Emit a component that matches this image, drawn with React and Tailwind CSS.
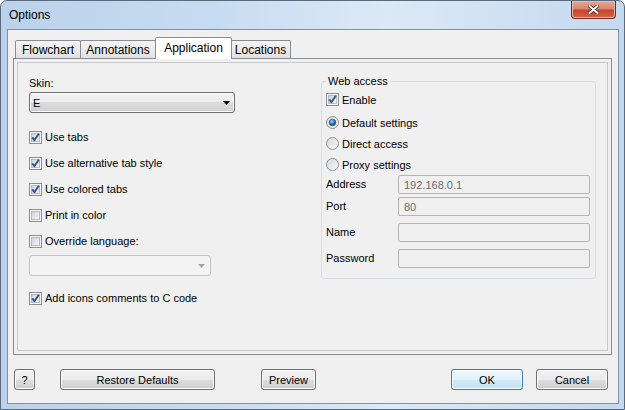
import React from 'react';

function CheckBox({ checked }) {
  return (
    <svg width="13" height="13" viewBox="0 0 13 13" className="shrink-0">
      <defs>
        <linearGradient id="cbFill" x1="0" y1="0" x2="1" y2="1">
          <stop offset="0" stopColor="#cdd1d6" />
          <stop offset="1" stopColor="#f8f8f8" />
        </linearGradient>
      </defs>
      <rect x="0.5" y="0.5" width="12" height="12" fill="#f6f6f6" stroke="#8e8f8f" />
      <rect x="2.5" y="2.5" width="8" height="8" fill="url(#cbFill)" stroke="#b7babe" />
      {checked && (
        <path d="M3.2 6.4 L5.4 9.2 L9.8 2.8" fill="none" stroke="#34508f" strokeWidth="1.9" strokeLinejoin="round" />
      )}
    </svg>
  );
}

function Radio({ checked }) {
  return (
    <svg width="13" height="13" viewBox="0 0 13 13" className="shrink-0">
      <defs>
        <linearGradient id="rbFill" x1="0" y1="0" x2="1" y2="1">
          <stop offset="0" stopColor="#d2d4d8" />
          <stop offset="1" stopColor="#fbfbfb" />
        </linearGradient>
        <radialGradient id="rbDot" cx="0.4" cy="0.35" r="0.7">
          <stop offset="0" stopColor="#a6e0ff" />
          <stop offset="0.5" stopColor="#2b7fc3" />
          <stop offset="1" stopColor="#0b3d75" />
        </radialGradient>
      </defs>
      <circle cx="6.5" cy="6.5" r="6" fill="url(#rbFill)" stroke="#8e8f8f" />
      {checked && <circle cx="6.5" cy="6.5" r="3.3" fill="url(#rbDot)" stroke="#1b4a80" strokeWidth="0.6" />}
    </svg>
  );
}

function Arrow({ color }) {
  return (
    <svg width="7" height="4" viewBox="0 0 7 4" className="shrink-0">
      <path d="M0 0 H7 L3.5 4 Z" fill={color} />
    </svg>
  );
}

function Check({ label, checked }) {
  return (
    <div className="h-[18px] flex items-center gap-[3px]">
      <CheckBox checked={checked} />
      <span>{label}</span>
    </div>
  );
}

function RadioRow({ label, checked }) {
  return (
    <div className="h-[21px] flex items-center gap-[3px]">
      <Radio checked={checked} />
      <span>{label}</span>
    </div>
  );
}

function Field({ label, value, className }) {
  return (
    <div className={'flex items-center ' + className}>
      <span className="w-[72px] -mt-px">{label}</span>
      <div className="w-[192px] h-[19px] border border-[#b5b5b5] rounded-[2px] bg-[#f0f0f0] pl-[5px] flex items-center text-[#6d6d6d]">
        {value}
      </div>
    </div>
  );
}

function Button({ children, className }) {
  return (
    <button className={'h-[21px] border border-[#707070] rounded-[3px] bg-[linear-gradient(to_bottom,#f2f2f2_0%,#ebebeb_50%,#dddddd_50%,#cfcfcf_100%)] shadow-[inset_0_0_0_1px_#fbfbfb] text-[11px] leading-[14px] flex items-center justify-center ' + className}>
      {children}
    </button>
  );
}

export default function App() {
  return (
    <div className="w-[625px] h-[410px] flex flex-col rounded-t-[7px] border border-[#5b6b7d] bg-[linear-gradient(to_right,#bad2eb_0%,#c8dcf1_35%,#dce9f6_62%,#c4d9ef_100%)] font-['Liberation_Sans',Arial,sans-serif] text-black overflow-hidden">
      {/* title bar */}
      <div className="h-[28px] shrink-0 flex items-start justify-between pl-[8px] pr-[8px]">
        <span className="mt-[7px] text-[12px] leading-[14px]">Options</span>
        <div className="w-[45px] h-[18px] rounded-b-[4px] border border-t-0 border-[#6b2b22] bg-[linear-gradient(to_bottom,#e9a99a_0%,#d98571_45%,#c7452c_55%,#d2634a_100%)] shadow-[inset_0_0_0_1px_#eeb6a8] flex items-center justify-center">
          <svg width="11" height="9" viewBox="0 0 11 9">
            <path d="M1.5 1 L9.5 8 M9.5 1 L1.5 8" stroke="#4a1f18" strokeWidth="3.6" strokeLinecap="round" />
            <path d="M1.5 1 L9.5 8 M9.5 1 L1.5 8" stroke="#ffffff" strokeWidth="2" strokeLinecap="round" />
          </svg>
        </div>
      </div>

      {/* client area */}
      <div className="flex-1 ml-[6px] mr-[5px] mb-[5px] border border-[#7f92a8] bg-[#f0f0f0] flex flex-col pt-[7px] text-[11px] leading-[14px]">
        <div className="pl-[5px] pr-[6px] flex flex-col">
          {/* tabs */}
          <div className="h-[21px] flex items-end pl-[2px] text-[12px]">
            <div className="w-[66px] h-[18px] border border-b-0 border-[#898c95] rounded-t-[2px] bg-[linear-gradient(to_bottom,#f4f4f4,#e2e2e2)] flex items-center justify-center">
              Flowchart
            </div>
            <div className="w-[76px] h-[18px] -ml-px border border-b-0 border-[#898c95] rounded-t-[2px] bg-[linear-gradient(to_bottom,#f4f4f4,#e2e2e2)] flex items-center justify-center">
              Annotations
            </div>
            <div className="relative z-10 w-[77px] h-[22px] -ml-px -mb-px border border-b-0 border-[#898c95] rounded-t-[2px] bg-white flex items-center justify-center pb-[2px]">
              Application
            </div>
            <div className="w-[61px] h-[18px] -ml-[2px] border border-b-0 border-[#898c95] rounded-t-[2px] bg-[linear-gradient(to_bottom,#f4f4f4,#e2e2e2)] flex items-center justify-center">
              Locations
            </div>
          </div>

          {/* tab page */}
          <div className="h-[297px] border border-[#898c95] bg-[#f0f0f0] flex">
            <div className="flex-1 m-[3px] border border-[#c8c8c8] flex justify-between pl-[11px] pr-[11px]">
              {/* left column */}
              <div className="flex flex-col pt-[13px]">
                <span>Skin:</span>
                <div className="mt-[2px] w-[206px] h-[21px] border border-[#707070] rounded-[3px] bg-[linear-gradient(to_bottom,#f2f2f2_0%,#ebebeb_50%,#dddddd_50%,#cfcfcf_100%)] shadow-[inset_0_0_0_1px_#fbfbfb] flex items-center justify-between pl-[3px] pr-[4px]">
                  <span>E</span>
                  <Arrow color="#000000" />
                </div>
                <div className="mt-[15px] flex flex-col gap-[8px]">
                  <Check label="Use tabs" checked />
                  <Check label="Use alternative tab style" checked />
                  <Check label="Use colored tabs" checked />
                  <Check label="Print in color" />
                  <Check label="Override language:" />
                </div>
                <div className="mt-[5px] w-[182px] h-[21px] border border-[#c2c5c8] rounded-[3px] bg-[#f4f4f4] flex items-center justify-end pr-[5px]">
                  <Arrow color="#a5a5a5" />
                </div>
                <div className="mt-[13px]">
                  <Check label="Add icons comments to C code" checked />
                </div>
              </div>

              {/* right column */}
              <div className="pt-[11px]">
                <fieldset className="w-[275px] border border-[#d5dfe5] rounded-[3px] pl-[4px] pr-[5px] pb-[10px]">
                  <legend className="px-[2px] leading-[14px]">Web access</legend>
                  <div className="mt-px h-[21px] flex items-center gap-[3px]">
                    <CheckBox checked />
                    <span>Enable</span>
                  </div>
                  <div className="mt-[2px]">
                    <RadioRow label="Default settings" checked />
                    <RadioRow label="Direct access" />
                    <RadioRow label="Proxy settings" />
                  </div>
                  <Field label="Address" value="192.168.0.1" className="" />
                  <Field label="Port" value="80" className="mt-[3px]" />
                  <Field label="Name" value="" className="mt-[7px]" />
                  <Field label="Password" value="" className="mt-[7px]" />
                </fieldset>
              </div>
            </div>
          </div>
        </div>

        {/* buttons */}
        <div className="mt-[14px] flex pl-[6px] pr-[10px]">
          <Button className="w-[21px]">?</Button>
          <Button className="ml-[25px] w-[155px]">Restore Defaults</Button>
          <Button className="ml-[46px] w-[55px]">Preview</Button>
          <button className="ml-auto w-[72px] h-[21px] border border-[#3c7fb1] rounded-[3px] bg-[linear-gradient(to_bottom,#eef7fd_0%,#e2f1fb_50%,#d2eaf8_50%,#c5e2f4_100%)] shadow-[inset_0_0_0_1px_#f4fbff] text-[11px] leading-[14px] flex items-center justify-center">
            OK
          </button>
          <Button className="ml-[13px] w-[72px]">Cancel</Button>
        </div>
      </div>
    </div>
  );
}
